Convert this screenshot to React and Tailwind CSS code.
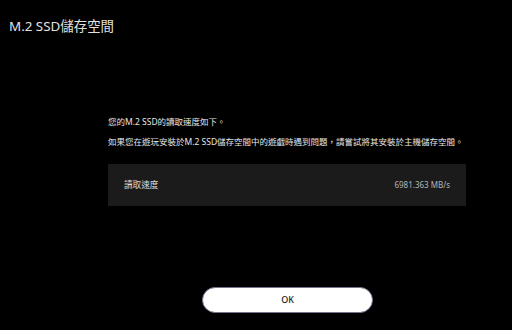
import React from "react";

export default function App() {
  return (
    <div
      className="w-[512px] h-[330px] bg-black flex flex-col overflow-hidden"
      style={{ fontFamily: '"Noto Sans", "Noto Sans CJK TC", sans-serif' }}
    >
      {/* Title */}
      <h1 className="pl-[9px] pt-[16px] text-[13.4px] leading-[20px] text-[#e2e2e2]">
        M.2 SSD儲存空間
      </h1>

      {/* Body */}
      <div className="pl-[108px] pt-[79px] w-[466px]">
        <p className="text-[8.5px] leading-[14px] text-[#e6e6e6]">您的M.2 SSD的讀取速度如下。</p>
        <p className="mt-[6px] text-[8.5px] leading-[14px] text-[#e6e6e6] whitespace-nowrap">
          如果您在遊玩安裝於M.2 SSD儲存空間中的遊戲時遇到問題，請嘗試將其安裝於主機儲存空間。
        </p>

        <div className="mt-[15px] h-[42px] bg-[#1b1b1b] flex items-center justify-between pl-[16px] pr-[16px]">
          <span className="text-[8.6px] text-[#dcdcdc]">讀取速度</span>
          <span className="text-[8px] text-[#b5b5b5]">6981.363 MB/s</span>
        </div>
      </div>

      {/* Button */}
      <div className="flex justify-center pt-[81px] pl-[63px]">
        <button className="w-[171px] h-[26px] rounded-full bg-white border-[1.5px] border-[#77728c] text-[9px] font-medium text-[#222]">
          OK
        </button>
      </div>
    </div>
  );
}
